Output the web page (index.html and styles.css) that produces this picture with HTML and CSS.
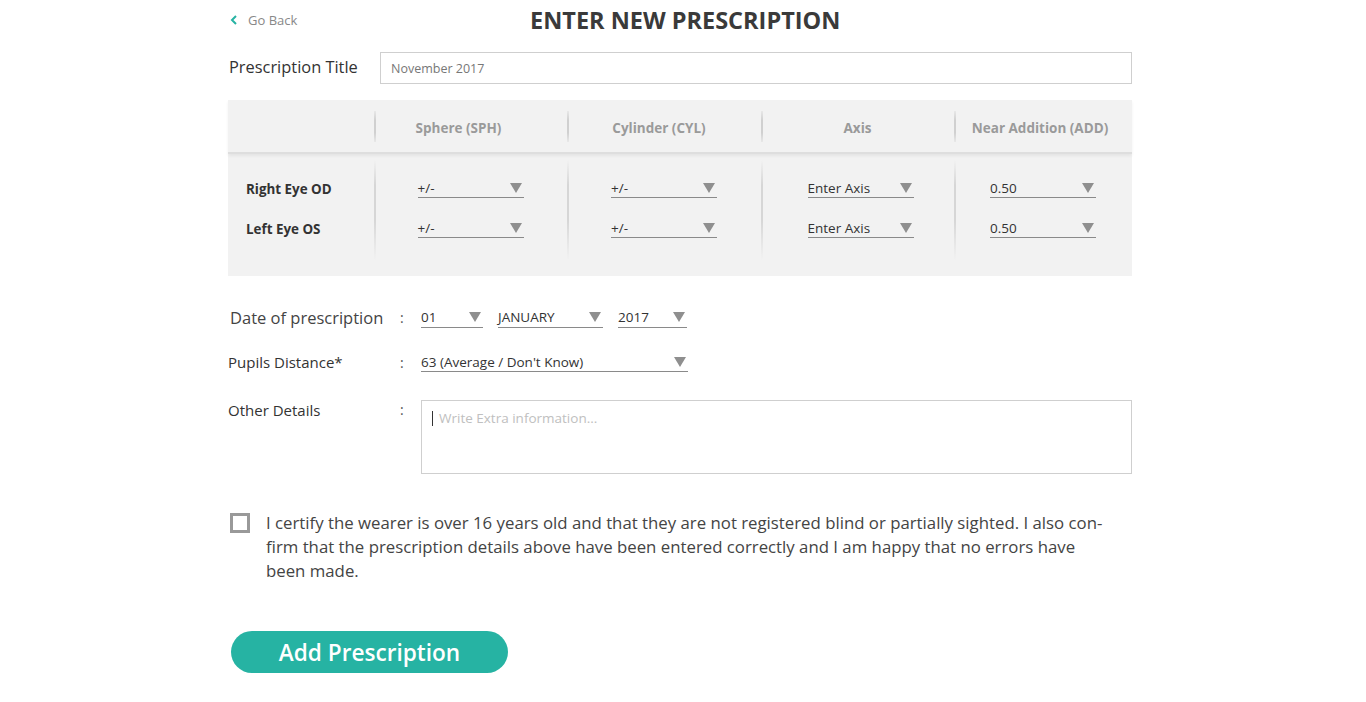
FILE: index.html
```html
<!DOCTYPE html>
<html lang="en">
<head>
    <meta charset="utf-8">
    <meta name="viewport" content="width=device-width, initial-scale=1.0">
    <title>Enter New Prescription</title>
    <link rel="stylesheet" href="styles.css">
</head>
<body>
    <div class="page">
        <header class="top">
            <a class="back" href="#">
                <svg width="8" height="10" viewBox="0 0 8 10"><path d="M6 1 L2 5 L6 9" fill="none" stroke="#26b3a3" stroke-width="2"/></svg>
                Go Back
            </a>
            <h1>ENTER NEW PRESCRIPTION</h1>
        </header>

        <div class="title-row">
            <label for="ptitle">Prescription Title</label>
            <input type="text" id="ptitle" value="November 2017">
        </div>

        <div class="rx">
            <div class="rx-head">
                <div class="cell"></div>
                <div class="cell sep">Sphere (SPH)</div>
                <div class="cell sep">Cylinder (CYL)</div>
                <div class="cell sep">Axis</div>
                <div class="cell sep">Near Addition (ADD)</div>
            </div>
            <div class="rx-body">
                <div class="col names">
                    <div class="eye">Right Eye OD</div>
                    <div class="eye">Left Eye OS</div>
                </div>
                <div class="col sep">
                    <div class="pick"><span>+/-</span><i class="caret"></i></div>
                    <div class="pick"><span>+/-</span><i class="caret"></i></div>
                </div>
                <div class="col sep">
                    <div class="pick"><span>+/-</span><i class="caret"></i></div>
                    <div class="pick"><span>+/-</span><i class="caret"></i></div>
                </div>
                <div class="col sep axis">
                    <div class="pick"><span>Enter Axis</span><i class="caret"></i></div>
                    <div class="pick"><span>Enter Axis</span><i class="caret"></i></div>
                </div>
                <div class="col sep">
                    <div class="pick"><span>0.50</span><i class="caret"></i></div>
                    <div class="pick"><span>0.50</span><i class="caret"></i></div>
                </div>
            </div>
        </div>

        <div class="field date-row">
            <div class="flabel big">Date of prescription</div>
            <div class="colon">:</div>
            <div class="picks">
                <div class="pick day"><span>01</span><i class="caret"></i></div>
                <div class="pick month"><span>JANUARY</span><i class="caret"></i></div>
                <div class="pick year"><span>2017</span><i class="caret"></i></div>
            </div>
        </div>

        <div class="field pd-row">
            <div class="flabel">Pupils Distance*</div>
            <div class="colon">:</div>
            <div class="picks">
                <div class="pick pd"><span>63 (Average / Don't Know)</span><i class="caret"></i></div>
            </div>
        </div>

        <div class="field other-row">
            <div class="flabel">Other Details</div>
            <div class="colon">:</div>
            <div class="notes"><span class="cursor"></span>Write Extra information...</div>
        </div>

        <div class="certify">
            <span class="box"></span>
            <p>I certify the wearer is over 16 years old and that they are not registered blind or partially sighted. I also con-<br>firm that the prescription details above have been entered correctly and I am happy that no errors have<br>been made.</p>
        </div>

        <button class="add">Add Prescription</button>
    </div>
</body>
</html>
```

FILE: styles.css
```css
body {
    margin: 0;
    background: #fff;
    color: #333;
    font-family: "Open Sans", "Noto Sans", sans-serif;
}

.page {
    width: 904px;
    margin-left: 228px;
}

.top {
    display: flex;
    align-items: center;
    height: 40px;
}

.back {
    display: flex;
    align-items: center;
    gap: 10px;
    width: 300px;
    padding-left: 2px;
    font-size: 13px;
    color: #888;
    text-decoration: none;
}

h1 {
    margin: 0;
    font-size: 23.5px;
    font-weight: 700;
    color: #3a3a3a;
}

.title-row {
    display: flex;
    align-items: center;
    margin-top: 12px;
}

.title-row label {
    width: 151px;
    padding-left: 1px;
    margin-top: -3px;
    font-size: 16.4px;
    color: #333;
}

.title-row input {
    flex: 1;
    height: 32px;
    box-sizing: border-box;
    border: 1px solid #cfcfcf;
    padding: 0 10px;
    font-family: inherit;
    font-size: 12.5px;
    color: #777;
}

.rx {
    margin-top: 16px;
    background: #f2f2f2;
    height: 176px;
}

.rx-head,
.rx-body {
    display: grid;
    grid-template-columns: 146px 193px 194px 193px 178px;
}

.rx-head {
    height: 52px;
    border-bottom: 2px solid #dedede;
    box-shadow: 0 2px 3px rgba(0, 0, 0, 0.06);
}

.rx-head .cell {
    display: flex;
    align-items: center;
    justify-content: center;
    padding-top: 4px;
    font-size: 13.5px;
    font-weight: 700;
    color: #9a9a9a;
}

.rx-head .cell:nth-child(2) { padding-right: 24px; }
.rx-head .cell:nth-child(3) { padding-right: 10px; }
.rx-head .cell:nth-child(5) { padding-right: 6px; }

.sep {
    position: relative;
}

.rx-head .sep::before {
    content: "";
    position: absolute;
    left: 0;
    top: 11px;
    height: 31px;
    width: 2px;
    background: linear-gradient(#e8e8e8, #d0d0d0 30%, #d0d0d0 70%, #e8e8e8);
}

.rx-body .sep::before {
    content: "";
    position: absolute;
    left: 0;
    top: 6px;
    height: 100px;
    width: 2px;
    background: linear-gradient(#f2f2f2, #d6d6d6 25%, #d6d6d6 60%, #f2f2f2);
}

.rx-body .col {
    display: flex;
    flex-direction: column;
    align-items: center;
    gap: 20px;
    padding-top: 24px;
}

.rx-body .axis {
    padding-left: 6px;
}

.rx-body .names {
    align-items: flex-start;
    padding-left: 18px;
}

.eye {
    height: 20px;
    line-height: 22px;
    font-size: 13.4px;
    font-weight: 700;
    color: #333;
}

.pick {
    display: flex;
    align-items: center;
    justify-content: space-between;
    width: 106px;
    height: 20px;
    box-sizing: border-box;
    border-bottom: 1px solid #8a8a8a;
    font-size: 13.5px;
    color: #333;
}

.caret {
    width: 0;
    height: 0;
    margin-right: 2px;
    border-left: 6px solid transparent;
    border-right: 6px solid transparent;
    border-top: 10px solid #8f8f8f;
}

.field {
    display: grid;
    grid-template-columns: 172px 21px 1fr;
    align-items: center;
}

.flabel {
    font-size: 15px;
    color: #333;
}

.flabel.big {
    font-size: 16.5px;
    padding-left: 2px;
    color: #444;
}

.colon {
    font-size: 14px;
    color: #555;
}

.picks {
    display: flex;
    gap: 15px;
}

.date-row {
    margin-top: 30px;
}

.pick.day { width: 62px; }
.pick.month { width: 105px; }
.pick.year { width: 69px; }
.pick.pd { width: 267px; }

.pd-row {
    margin-top: 23px;
}

.other-row {
    margin-top: 28px;
    align-items: start;
}

.notes {
    height: 74px;
    box-sizing: border-box;
    border: 1px solid #cfcfcf;
    padding: 8px 10px;
    font-size: 13.5px;
    color: #c0c0c0;
    display: flex;
    align-items: flex-start;
}

.cursor {
    display: inline-block;
    width: 1px;
    height: 15px;
    margin-top: 2px;
    margin-right: 6px;
    background: #333;
}

.certify {
    display: flex;
    gap: 16px;
    margin-top: 37px;
    padding-left: 2px;
}

.box {
    flex: none;
    width: 20px;
    height: 20px;
    box-sizing: border-box;
    border: 3px solid #999;
    margin-top: 2px;
}

.certify p {
    margin: 0;
    font-size: 16.8px;
    line-height: 24px;
    color: #444;
}

.add {
    display: block;
    margin: 48px 0 0 3px;
    width: 277px;
    height: 42px;
    border: none;
    border-radius: 21px;
    background: #26b3a3;
    color: #fff;
    font-family: inherit;
    font-size: 22.6px;
    font-weight: 600;
}
```
